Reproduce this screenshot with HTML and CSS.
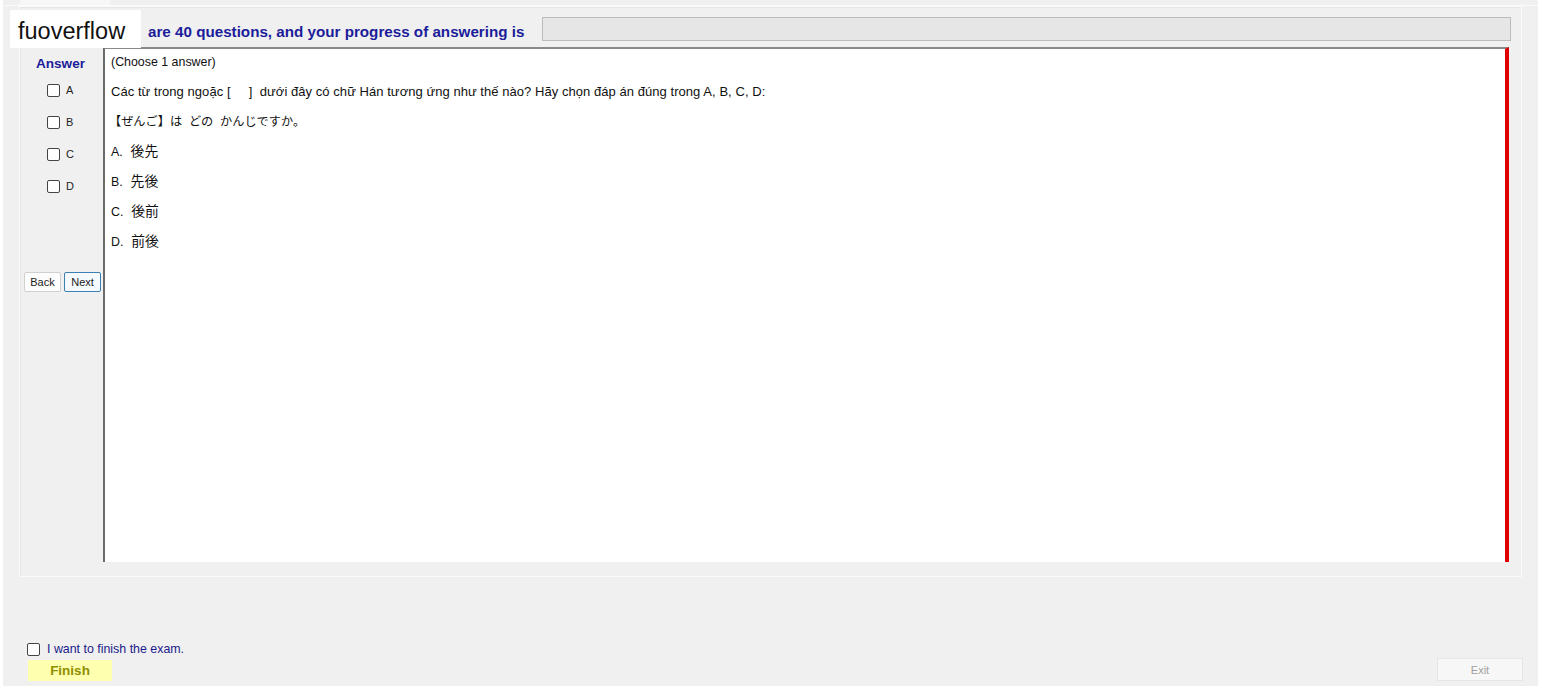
FILE: index.html
```html
<!DOCTYPE html>
<html lang="en">
<head>
    <meta charset="UTF-8">
    <title>Exam</title>
    <link rel="stylesheet" href="styles.css">
</head>
<body>
    <div class="window">
        <div class="tabs"><div class="tab"></div></div>

        <div class="group">
            <div class="header">
                <span class="header-text">are 40 questions, and your progress of answering is</span>
                <div class="progress"></div>
            </div>

            <div class="main">
                <!-- answers column -->
                <div class="answers">
                    <div class="answer-title">Answer</div>
                    <label class="option"><span class="box"></span>A</label>
                    <label class="option"><span class="box"></span>B</label>
                    <label class="option"><span class="box"></span>C</label>
                    <label class="option"><span class="box"></span>D</label>
                    <div class="nav">
                        <button class="btn">Back</button>
                        <button class="btn btn-next">Next</button>
                    </div>
                </div>

                <!-- question -->
                <div class="question">
                    <div class="line">(Choose 1 answer)</div>
                    <div class="line wide">Các từ trong ngoặc [&nbsp;&nbsp;&nbsp;&nbsp; ]&nbsp; dưới đây có chữ Hán tương ứng như thế nào? Hãy chọn đáp án đúng trong A, B, C, D:</div>
                    <div class="line jp">【ぜんご】は&nbsp; どの&nbsp; かんじですか。</div>
                    <div class="line">A.&nbsp; <span class="kanji">後先</span></div>
                    <div class="line">B.&nbsp; <span class="kanji">先後</span></div>
                    <div class="line">C.&nbsp; <span class="kanji">後前</span></div>
                    <div class="line">D.&nbsp; <span class="kanji">前後</span></div>
                </div>
            </div>
        </div>

        <div class="footer">
            <div class="finish-block">
                <label class="finish-check"><span class="box"></span>I want to finish the exam.</label>
                <button class="btn-finish">Finish</button>
            </div>
            <button class="btn-exit">Exit</button>
        </div>

        <div class="watermark">fuoverflow</div>
    </div>
</body>
</html>
```

FILE: styles.css
```css
body {
    margin: 0;
    background: #ffffff;
    font-family: "Liberation Sans", Arial, "Noto Sans CJK JP", sans-serif;
}
.window {
    position: relative;
    margin-left: 3px;
    width: 1535px;
    height: 686px;
    background: #f0f0f0;
    display: flex;
    flex-direction: column;
}
.tabs {
    height: 5px;
    border-bottom: 1px solid #fafafa;
    padding-left: 17px;
}
.tab {
    width: 90px;
    height: 5px;
    background: #f7f7f7;
}
.group {
    margin-left: 16px;
    width: 1503px;
    height: 571px;
    border: 1px solid #fafafa;
    box-shadow: inset 1px 1px 0 #e6e6e6;
    padding: 10px 12px 0 2px;
    box-sizing: border-box;
    display: flex;
    flex-direction: column;
}
.header {
    height: 24px;
    display: flex;
    align-items: center;
    padding-left: 126px;
    margin-bottom: 6px;
}
.header-text {
    font-weight: bold;
    font-size: 15.2px;
    color: #1c1c9a;
    width: 394px;
    padding-top: 4px;
    white-space: nowrap;
}
.progress {
    flex: 1;
    height: 22px;
    margin-top: -1px;
    background: #e6e6e6;
    border: 1px solid #bcbcbc;
    margin-right: -2px;
}
.main {
    display: flex;
    height: 515px;
}
.answers {
    width: 81px;
    display: flex;
    flex-direction: column;
    align-items: center;
}
.answer-title {
    font-weight: bold;
    font-size: 13.6px;
    color: #1c1c9a;
    margin-top: 9px;
    height: 18px;
    margin-left: -4px;
}
.option {
    display: flex;
    align-items: center;
    align-self: flex-start;
    gap: 6px;
    height: 32px;
    font-size: 11px;
    color: #222;
    margin-left: 25px;
}
.box {
    display: inline-block;
    width: 11px;
    height: 11px;
    border: 1px solid #444;
    border-radius: 2px;
    background: #fff;
}
.nav {
    display: flex;
    gap: 3px;
    margin-top: 70px;
}
.btn {
    width: 37px;
    height: 20px;
    padding: 0;
    font-family: inherit;
    font-size: 11px;
    color: #222;
    background: #fdfdfd;
    border: 1px solid #d0d0d0;
    border-radius: 2px;
}
.btn-next {
    border-color: #3c7fb1;
    background: #f4fafe;
}
.question {
    flex: 1;
    background: #ffffff;
    border-left: 2px solid #6b6b6b;
    border-top: 2px solid #8a8a8a;
    border-right: 4px solid #e00000;
    padding: 0 0 0 6px;
    font-size: 12.4px;
    color: #111;
}
.line {
    height: 30px;
    line-height: 26px;
    white-space: nowrap;
}
.wide {
    font-size: 13px;
    letter-spacing: 0.05px;
}
.jp {
    font-size: 12.2px;
    margin-left: -2px;
}
.kanji {
    font-size: 13.8px;
    margin-left: 1px;
}
.footer {
    flex: 1;
    display: flex;
    justify-content: space-between;
    align-items: flex-end;
    padding: 0 15px 5px 22px;
}
.finish-block {
    display: flex;
    flex-direction: column;
}
.finish-check {
    display: flex;
    align-items: center;
    gap: 7px;
    font-size: 12.4px;
    color: #1c1c8c;
    margin-left: 2px;
    margin-bottom: 4px;
}
.btn-finish {
    width: 84px;
    height: 21px;
    margin-left: 3px;
    padding: 0;
    border: none;
    background: #ffffb0;
    color: #8e8e00;
    font-family: inherit;
    font-weight: bold;
    font-size: 13.5px;
}
.btn-exit {
    width: 86px;
    height: 23px;
    padding: 0;
    background: #f7f7f7;
    border: 1px solid #e6e6e6;
    color: #a0a0a0;
    font-family: inherit;
    font-size: 11px;
}
.watermark {
    position: absolute;
    left: 7px;
    top: 10px;
    width: 131px;
    height: 38px;
    background: #ffffff;
    font-size: 23.5px;
    color: #111;
    padding-left: 8px;
    line-height: 42px;
    box-sizing: border-box;
}
```
